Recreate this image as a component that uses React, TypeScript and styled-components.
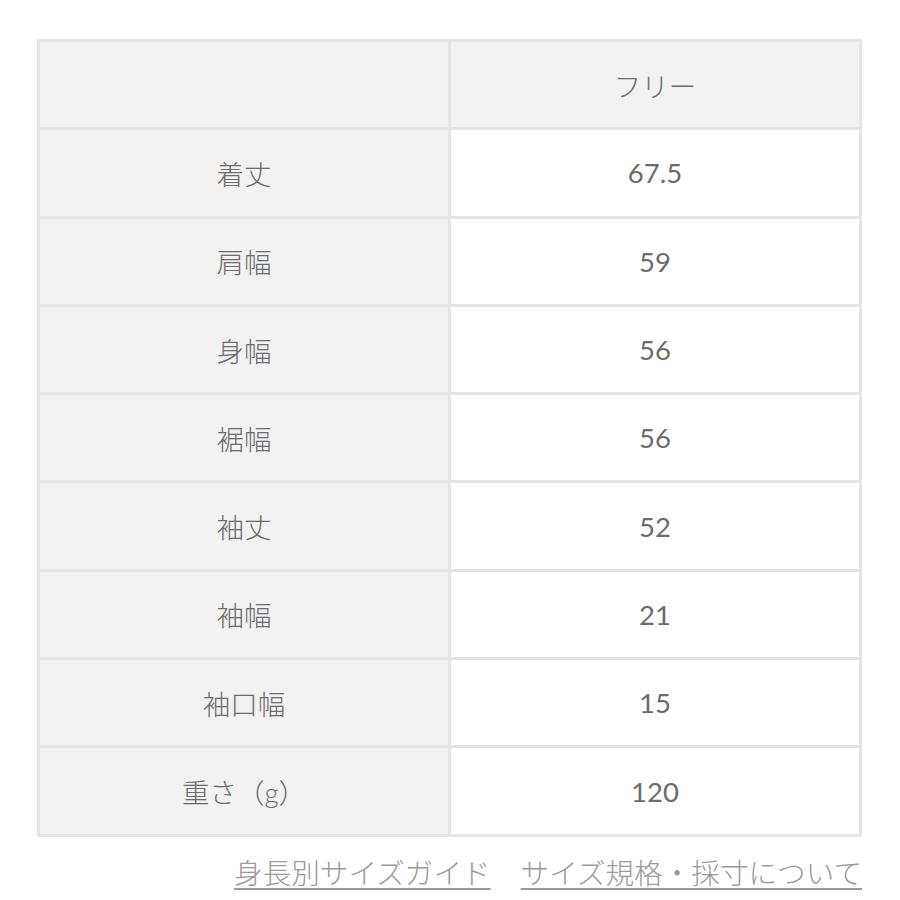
import React from "react";
import styled, { createGlobalStyle } from "styled-components";

const Global = createGlobalStyle`
  html, body { margin: 0; padding: 0; background: #fff; }
  body { font-family: Lato, "Noto Sans CJK JP", sans-serif; }
`;

const Page = styled.div`
  padding: 39px 38px 0 37px;
  width: 825px;
`;

const Table = styled.table`
  width: 825px;
  border-collapse: collapse;
  table-layout: fixed;
  border: 2px solid #e2e2e2;
`;

const Cell = styled.td<{ $shade?: boolean; $num?: boolean }>`
  height: 85.3px;
  padding: 0;
  text-align: center;
  vertical-align: middle;
  border: 3px solid #e4e6e6;
  background: ${(p) => (p.$shade ? "#f2f2f2" : "#ffffff")};
  color: #6c6c6c;
  font-size: 27.5px;
  font-family: Lato, "Noto Sans CJK JP", sans-serif;
  font-weight: ${(p) => (p.$num ? 400 : 300)};
`;

const Links = styled.div`
  display: flex;
  justify-content: flex-end;
  gap: 30px;
  margin-top: 17px;
`;

const Link = styled.a`
  color: #9a9a9a;
  font-size: 28.6px;
  font-family: "Noto Sans CJK JP", sans-serif;
  font-weight: 300;
  text-decoration: underline;
  text-decoration-thickness: 2px;
  text-underline-offset: 4px;
  line-height: 36px;
`;

const rows: [string, string][] = [
  ["着丈", "67.5"],
  ["肩幅", "59"],
  ["身幅", "56"],
  ["裾幅", "56"],
  ["袖丈", "52"],
  ["袖幅", "21"],
  ["袖口幅", "15"],
  ["重さ（g）", "120"],
];

export default function App() {
  return (
    <Page>
      <Global />
      <Table>
        <tbody>
          <tr>
            <Cell $shade />
            <Cell $shade>フリー</Cell>
          </tr>
          {rows.map(([k, v]) => (
            <tr key={k}>
              <Cell $shade>{k}</Cell>
              <Cell $num>{v}</Cell>
            </tr>
          ))}
        </tbody>
      </Table>
      <Links>
        <Link>身長別サイズガイド</Link>
        <Link>サイズ規格・採寸について</Link>
      </Links>
    </Page>
  );
}
